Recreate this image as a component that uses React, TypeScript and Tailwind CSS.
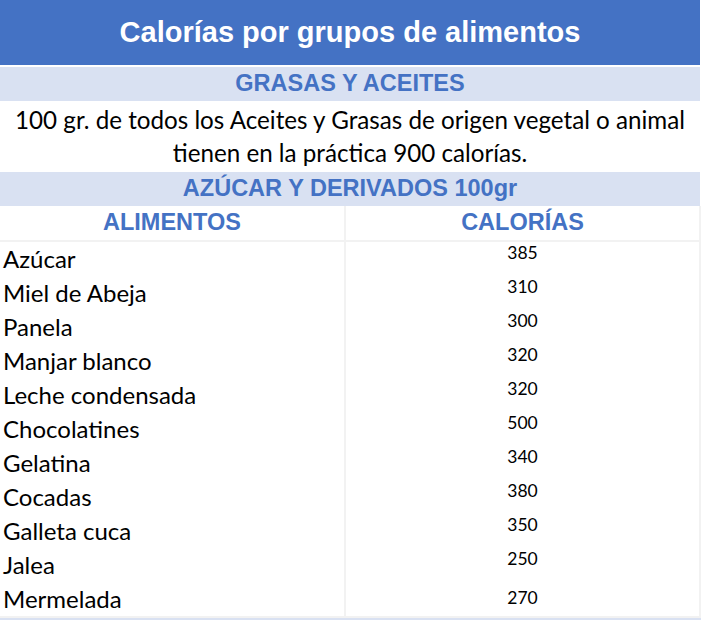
const rows: { name: string; kcal: number; pad?: string }[] = [
  { name: 'Azúcar', kcal: 385 },
  { name: 'Miel de Abeja', kcal: 310 },
  { name: 'Panela', kcal: 300 },
  { name: 'Manjar blanco', kcal: 320 },
  { name: 'Leche condensada', kcal: 320 },
  { name: 'Chocolatines', kcal: 500 },
  { name: 'Gelatina', kcal: 340 },
  { name: 'Cocadas', kcal: 380 },
  { name: 'Galleta cuca', kcal: 350 },
  { name: 'Jalea', kcal: 250 },
  { name: 'Mermelada', kcal: 270, pad: 'pt-[6px]' },
];

const arial = "font-['Liberation_Sans',Arial,sans-serif]";
const body = "font-['Lato','Open_Sans',sans-serif]";

function Band({ children }: { children: React.ReactNode }) {
  return (
    <div
      className={`h-[34px] bg-[#D9E1F2] flex items-center justify-center ${arial} font-bold text-[23.5px] text-[#4472C4]`}
    >
      {children}
    </div>
  );
}

export default function App() {
  return (
    <div className="w-[705px] h-[620px] bg-white overflow-hidden">
      <div className="w-[700px]">
        <div
          className={`h-[65px] bg-[#4472C4] flex items-center justify-center ${arial} font-bold text-[29px] text-white`}
        >
          Calorías por grupos de alimentos
        </div>
        <div className="h-[2px]" />
        <Band>GRASAS Y ACEITES</Band>

        <div
          className={`h-[71px] flex flex-col items-center justify-center ${body} text-[24.2px] leading-[33px] text-black pb-[2px]`}
        >
          <span>100 gr. de todos los Aceites y Grasas de origen vegetal o animal</span>
          <span>tienen en la práctica 900 calorías.</span>
        </div>

        <Band>AZÚCAR Y DERIVADOS 100gr</Band>
      </div>

      <div className="w-[701px] border-r-2 border-[#F2F2F2]">
        <div className="grid grid-cols-[346px_353px] border-b-2 border-[#F2F2F2]">
          <div
            className={`h-[34px] border-r-2 border-[#F2F2F2] flex items-center justify-center ${arial} font-bold text-[23.5px] text-[#4472C4]`}
          >
            ALIMENTOS
          </div>
          <div
            className={`h-[34px] flex items-center justify-center ${arial} font-bold text-[23.5px] text-[#4472C4]`}
          >
            CALORÍAS
          </div>
        </div>

        {rows.map((r) => (
          <div key={r.name} className="grid grid-cols-[346px_353px]">
            <div
              className={`h-[34px] border-r-2 border-[#F2F2F2] flex items-center pl-[3px] ${body} text-[24px] text-black`}
            >
              {r.name}
            </div>
            <div
              className={`h-[34px] flex justify-center ${r.pad ?? 'pt-[1px]'} ${body} text-[17.5px] leading-[20px] text-black`}
            >
              {r.kcal}
            </div>
          </div>
        ))}
      </div>

      <div className="w-[701px] h-[2px] bg-[#F2F2F2]" />
      <div className="w-[701px] h-[6px] bg-[#D9E1F2]" />
    </div>
  );
}
